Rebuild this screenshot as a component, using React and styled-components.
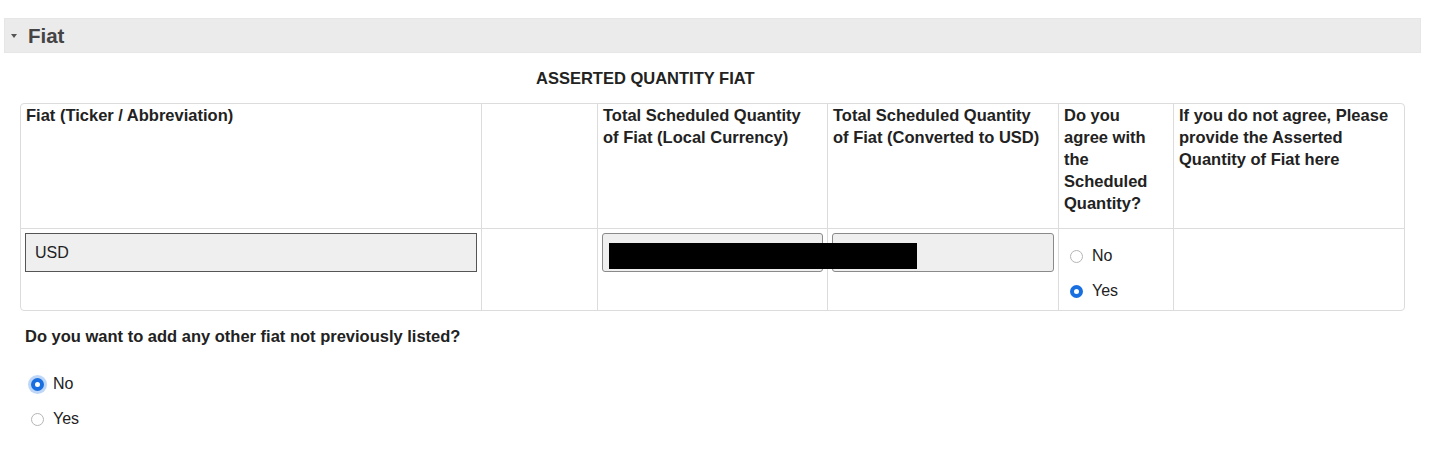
import styled, { createGlobalStyle } from 'styled-components';

const GlobalStyle = createGlobalStyle`
    body {
        margin: 0;
        background: #fff;
        font-family: 'Liberation Sans', Arial, sans-serif;
        color: #222;
    }
`;

const Page = styled.div`
    padding: 18px 8px 20px 4px;
`;

const SectionBar = styled.div`
    display: flex;
    align-items: center;
    height: 35px;
    background: #ebebeb;
    border: 1px solid #e6e6e6;
    box-sizing: border-box;
    padding-left: 6px;
    .caret {
        width: 0;
        height: 0;
        border-left: 3px solid transparent;
        border-right: 3px solid transparent;
        border-top: 4px solid #555;
        margin-right: 11px;
        margin-top: 1px;
    }
    h2 {
        margin: 0;
        font-size: 20.5px;
        font-weight: 700;
        color: #444;
    }
`;

const Caption = styled.div`
    padding: 16px 0 0 532px;
    height: 50px;
    box-sizing: border-box;
    font-size: 16.5px;
    font-weight: 700;
    color: #222;
`;

const Table = styled.table`
    margin-left: 16px;
    width: 1385px;
    table-layout: fixed;
    border-collapse: separate;
    border-spacing: 0;
    border: 1px solid #dcdcdc;
    border-radius: 4px;
    th,
    td {
        border-right: 1px solid #dcdcdc;
        vertical-align: top;
        text-align: left;
        font-size: 16.5px;
        line-height: 22px;
    }
    th:last-child,
    td:last-child {
        border-right: none;
    }
    th {
        padding: 0 8px 0 5px;
        font-weight: 700;
        height: 124px;
        border-bottom: 1px solid #dcdcdc;
        color: #222;
    }
    td {
        padding: 4px 4px 0;
        height: 77px;
    }
`;

const Field = styled.div`
    position: relative;
    height: 39px;
    box-sizing: border-box;
    background: #efefef;
    border: 1px solid ${(p) => (p.$square ? '#555' : '#8a8a8a')};
    border-radius: ${(p) => (p.$square ? '0' : '3px')};
    padding: 0 9px;
    display: flex;
    align-items: center;
    font-size: 16px;
    color: #222;
`;

const Redacted = styled.span`
    position: absolute;
    left: 6px;
    top: 9px;
    width: 308px;
    height: 26px;
    background: #000;
    z-index: 2;
`;

const RadioList = styled.div`
    display: flex;
    flex-direction: column;
    gap: ${(p) => p.$gap || '13px'};
    padding: ${(p) => p.$pad || '0'};
`;

const RadioRow = styled.label`
    display: flex;
    align-items: center;
    gap: 9px;
    font-size: 16px;
    line-height: 22px;
    color: #222;
`;

const Dot = styled.span`
    width: 13px;
    height: 13px;
    border-radius: 50%;
    box-sizing: border-box;
    border: ${(p) => (p.$on ? '4px solid #1a6fe0' : '1px solid #b5b5b5')};
    background: #fff;
    box-shadow: ${(p) => (p.$glow ? '0 0 0 3px rgba(26,111,224,0.28)' : 'none')};
`;

const Question = styled.div`
    margin: 16px 0 0 21px;
    font-size: 16.5px;
    font-weight: 700;
    color: #222;
`;

const Radio = ({ label, on, glow }) => (
    <RadioRow>
        <Dot $on={on} $glow={glow} />
        {label}
    </RadioRow>
);

const App = () => (
    <>
        <GlobalStyle />
        <Page>
            <SectionBar>
                <span className='caret' />
                <h2>Fiat</h2>
            </SectionBar>
            <Caption>ASSERTED QUANTITY FIAT</Caption>
            <Table>
                <colgroup>
                    <col style={{ width: 461 }} />
                    <col style={{ width: 116 }} />
                    <col style={{ width: 230 }} />
                    <col style={{ width: 231 }} />
                    <col style={{ width: 115 }} />
                    <col style={{ width: 230 }} />
                </colgroup>
                <thead>
                    <tr>
                        <th>Fiat (Ticker / Abbreviation)</th>
                        <th></th>
                        <th>Total Scheduled Quantity of Fiat (Local Currency)</th>
                        <th>Total Scheduled Quantity of Fiat (Converted to USD)</th>
                        <th>Do you agree with the Scheduled Quantity?</th>
                        <th>If you do not agree, Please provide the Asserted Quantity of Fiat here</th>
                    </tr>
                </thead>
                <tbody>
                    <tr>
                        <td>
                            <Field $square>USD</Field>
                        </td>
                        <td></td>
                        <td>
                            <Field>
                                <Redacted />
                            </Field>
                        </td>
                        <td>
                            <Field />
                        </td>
                        <td>
                            <RadioList $pad='12px 0 0 7px' $gap='13px'>
                                <Radio label='No' />
                                <Radio label='Yes' on />
                            </RadioList>
                        </td>
                        <td></td>
                    </tr>
                </tbody>
            </Table>
            <Question>Do you want to add any other fiat not previously listed?</Question>
            <RadioList $pad='27px 0 0 27px'>
                <Radio label='No' on glow />
                <Radio label='Yes' />
            </RadioList>
        </Page>
    </>
);

export default App;
